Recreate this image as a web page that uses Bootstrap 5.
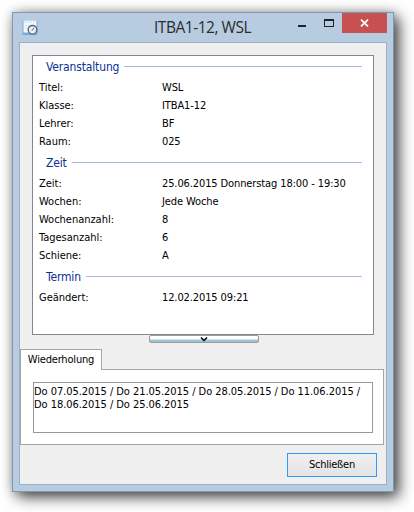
<!DOCTYPE html>
<html lang="de">
<head>
<meta charset="utf-8">
<meta name="viewport" content="width=device-width, initial-scale=1">
<title>ITBA1-12, WSL</title>
<link href="https://cdn.jsdelivr.net/npm/bootstrap@5.3.0/dist/css/bootstrap.min.css" rel="stylesheet">
<style>
body{width:414px;height:512px;overflow:hidden;background:#fff;color:#000;font-family:"DejaVu Sans Condensed","DejaVu Sans",sans-serif;font-stretch:condensed;font-size:11px;line-height:18px;padding:12px}
.win{width:382px;height:480px;background:#b7cce1;border:1px solid #8097b0;box-shadow:5px 5px 14px rgba(0,0,0,.72),0 0 10px rgba(0,0,0,.2)}
.titlebar{height:29px;padding:0 6px 0 9px}
.app-icon{margin-top:7px}
.title-text{font:15.5px/29px "Open Sans",sans-serif;color:#2b2b2b;white-space:nowrap;letter-spacing:-.47px;padding-left:115px}
.close-box{width:45px;height:20px;background:#c75050}
.client{margin:0 6px;width:368px;height:443px;background:#efefef;border:1px solid #9bafc6}
.info{margin:12px 12px 0;height:280px;background:#fff;border:1px solid #828790;padding:0 11px 0 6px}
.group{height:24px;padding-left:7px;font-size:12px;letter-spacing:-.15px;color:#0a3296}
.group:first-child{margin-top:-2px}
.group span{padding-top:2px}
.group i{height:1px;background:#a9b9e0;margin-left:5px}
.line{height:18px;line-height:20px}
.line span{white-space:nowrap;letter-spacing:-.11px}
.line span:first-child{width:123px;letter-spacing:-.02px}
.splitter{width:110px;height:8px;margin-left:129px;border:1px solid #999ca2;border-radius:2px;background:linear-gradient(#fff 0 50%,#cde3ed 50% 67%,#9fc3d4 67%)}
.tab-head{width:82px;height:21px;margin-top:6px;background:#fff;border:1px solid #a6a6a6;border-bottom:0;line-height:19px;z-index:1;letter-spacing:-.18px}
.tab-body{width:364px;height:76px;margin-top:-1px;border:1px solid #a6a6a6;background:#fff;padding:12px}
.dates{width:340px;height:51px;border:1px solid #999;padding:2px 0 0;line-height:13px;white-space:nowrap;letter-spacing:-.05px}
.btn-end{width:90px;height:24px;margin:8px 9px 0 0;padding:0;border:1px solid #3399ff;border-radius:0;background:linear-gradient(#f0f0f0,#e3e3e3);font-size:11px;letter-spacing:-.25px;line-height:22px;color:#000}
</style>
<script src="https://cdn.jsdelivr.net/npm/bootstrap@5.3.0/dist/js/bootstrap.bundle.min.js"></script>
</head>
<body>
<main class="win">
  <header class="titlebar d-flex align-items-start">
    <svg class="app-icon" width="17" height="16" viewBox="0 0 17 16"><rect x=".5" y=".5" width="15" height="14.5" rx="1" fill="#7ba8d8"/><rect x="1.500" y=".5" width="13" height="12" fill="#f5f8fa"/><path d="M2 2h12M3 5.500h10M3 8h4" stroke="#ccd9e2" fill="none" stroke-dasharray="2 1"/><circle cx="10.500" cy="9.800" r="4.300" fill="#e9eff4" stroke="#4b6580" stroke-width="1.300"/><path d="M9.800 10.700 12 7.800" stroke="#668" fill="none"/></svg>
    <span class="title-text flex-grow-1">ITBA1-12, WSL</span>
    <svg width="52" height="20" viewBox="0 0 52 20"><path d="M8 12h8v2H8z" fill="#222"/><path d="M34 6h10v8H34zm1 2v5h8V8z" fill="#222" fill-rule="evenodd"/></svg>
    <div class="close-box d-flex align-items-center justify-content-center"><svg width="9" height="8" viewBox="0 0 9 8"><path d="M1 .7 8 7.300M8 .7 1 7.300" stroke="#fff" stroke-width="1.800"/></svg></div>
  </header>
  <section class="client">
    <div class="info">
      <div class="group d-flex align-items-center"><span>Veranstaltung</span><i class="flex-grow-1"></i></div>
      <div class="line d-flex"><span>Titel:</span><span>WSL</span></div>
      <div class="line d-flex"><span>Klasse:</span><span>ITBA1-12</span></div>
      <div class="line d-flex"><span>Lehrer:</span><span>BF</span></div>
      <div class="line d-flex"><span>Raum:</span><span>025</span></div>
      <div class="group d-flex align-items-center"><span>Zeit</span><i class="flex-grow-1"></i></div>
      <div class="line d-flex"><span>Zeit:</span><span>25.06.2015 Donnerstag 18:00 - 19:30</span></div>
      <div class="line d-flex"><span>Wochen:</span><span>Jede Woche</span></div>
      <div class="line d-flex"><span>Wochenanzahl:</span><span>8</span></div>
      <div class="line d-flex"><span>Tagesanzahl:</span><span>6</span></div>
      <div class="line d-flex"><span>Schiene:</span><span>A</span></div>
      <div class="group d-flex align-items-center"><span>Termin</span><i class="flex-grow-1"></i></div>
      <div class="line d-flex"><span>Geändert:</span><span>12.02.2015 09:21</span></div>
    </div>
    <div class="splitter d-flex justify-content-center"><svg width="8" height="6" viewBox="0 0 8 6"><path d="M1 1.500 4 4.500 7 1.500" fill="none" stroke="#000" stroke-width="1.500"/></svg></div>
    <div class="tab-head position-relative text-center">Wiederholung</div>
    <div class="tab-body"><div class="dates">Do 07.05.2015 / Do 21.05.2015 / Do 28.05.2015 / Do 11.06.2015 /<br>Do 18.06.2015 / Do 25.06.2015</div></div>
    <div class="d-flex justify-content-end"><button class="btn btn-end" type="button">Schließen</button></div>
  </section>
</main>
</body>
</html>
